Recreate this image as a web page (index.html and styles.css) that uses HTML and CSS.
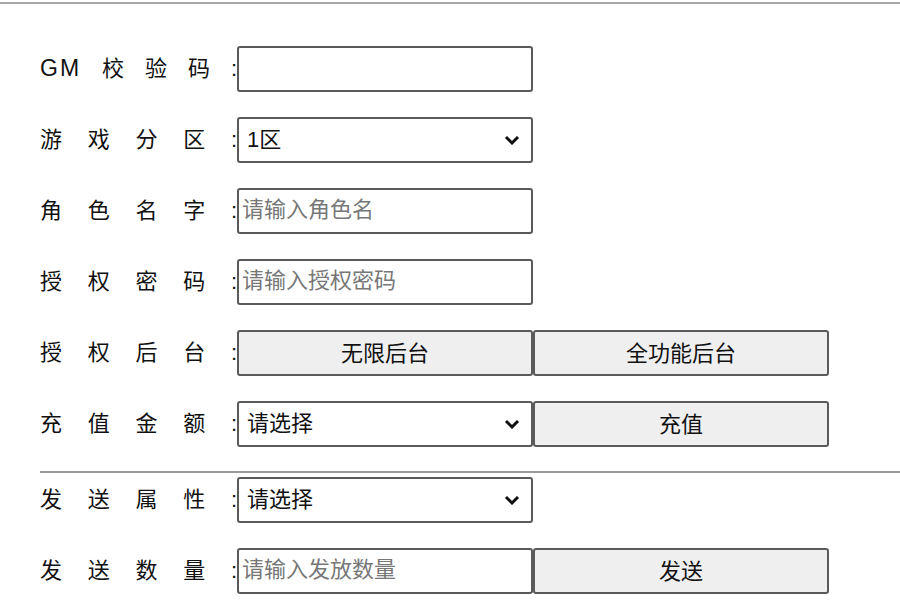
FILE: index.html
```html
<!DOCTYPE html>
<html lang="zh-CN">
<head>
  <meta charset="UTF-8">
  <title>GM后台</title>
  <link rel="stylesheet" href="styles.css">
</head>
<body>
  <div class="top-line"></div>

  <div class="form">
    <div class="row">
      <label class="label" for="gmCode"><span class="latin">GM</span>校验码:</label>
      <input class="field" type="text" id="gmCode" name="gmCode">
    </div>

    <div class="row">
      <label class="label" for="zone">游戏分区:</label>
      <select class="field select" id="zone" name="zone">
        <option>1区</option>
        <option>2区</option>
      </select>
    </div>

    <div class="row">
      <label class="label" for="roleName">角色名字:</label>
      <input class="field" type="text" id="roleName" name="roleName" placeholder="请输入角色名">
    </div>

    <div class="row">
      <label class="label" for="authPwd">授权密码:</label>
      <input class="field" type="password" id="authPwd" name="authPwd" placeholder="请输入授权密码">
    </div>

    <div class="row">
      <span class="label">授权后台:</span>
      <button class="btn">无限后台</button>
      <button class="btn">全功能后台</button>
    </div>

    <div class="row">
      <label class="label" for="amount">充值金额:</label>
      <select class="field select" id="amount" name="amount">
        <option>请选择</option>
      </select>
      <button class="btn">充值</button>
    </div>

    <div class="divider"></div>

    <div class="row">
      <label class="label" for="attr">发送属性:</label>
      <select class="field select" id="attr" name="attr">
        <option>请选择</option>
      </select>
    </div>

    <div class="row">
      <label class="label" for="count">发送数量:</label>
      <input class="field" type="number" id="count" name="count" placeholder="请输入发放数量">
      <button class="btn">发送</button>
    </div>
  </div>
</body>
</html>
```

FILE: styles.css
```css
body {
  margin: 0;
  background-color: #fff;
  font-family: "Liberation Sans", "Noto Sans CJK SC", sans-serif;
  color: #111;
}

.top-line {
  margin-top: 2px;
  height: 2px;
  background-color: #a8a8a8;
}

.form {
  padding: 42px 0 0 40px;
}

.row {
  display: flex;
  align-items: center;
  height: 46px;
  margin-bottom: 25px;
}

.label {
  width: 197px;
  font-size: 22px;
  line-height: 1;
  padding-bottom: 1px;
  text-align: justify;
  text-align-last: justify;
  white-space: nowrap;
}

.latin {
  font-size: 23px;
  letter-spacing: 2px;
}

.field,
.btn {
  box-sizing: border-box;
  width: 296px;
  height: 46px;
  border: 2px solid #5a5a5a;
  border-radius: 3px;
  font-family: "Liberation Sans", "Noto Sans CJK SC", sans-serif;
  font-size: 22px;
  color: #111;
  margin: 0;
}

.field {
  padding: 0 3px 2px 3px;
  background-color: #fff;
}

.field::placeholder {
  color: #777;
}

input[type="number"] {
  -moz-appearance: textfield;
}

input[type="number"]::-webkit-inner-spin-button {
  -webkit-appearance: none;
}

.select {
  -webkit-appearance: none;
  appearance: none;
  padding-left: 8px;
  background-image: url("data:image/svg+xml,%3Csvg xmlns='http://www.w3.org/2000/svg' width='16' height='10' viewBox='0 0 16 10'%3E%3Cpath d='M2 2l6 6 6-6' fill='none' stroke='%23111' stroke-width='3'/%3E%3C/svg%3E");
  background-repeat: no-repeat;
  background-position: right 11px center;
}

.btn {
  background-color: #efefef;
  padding-bottom: 5px;
  cursor: pointer;
}

.btn:hover {
  background-color: #e5e5e5;
}

.divider {
  height: 2px;
  margin: -1px 0 4px 0;
  background-color: #9a9a9a;
}
```
